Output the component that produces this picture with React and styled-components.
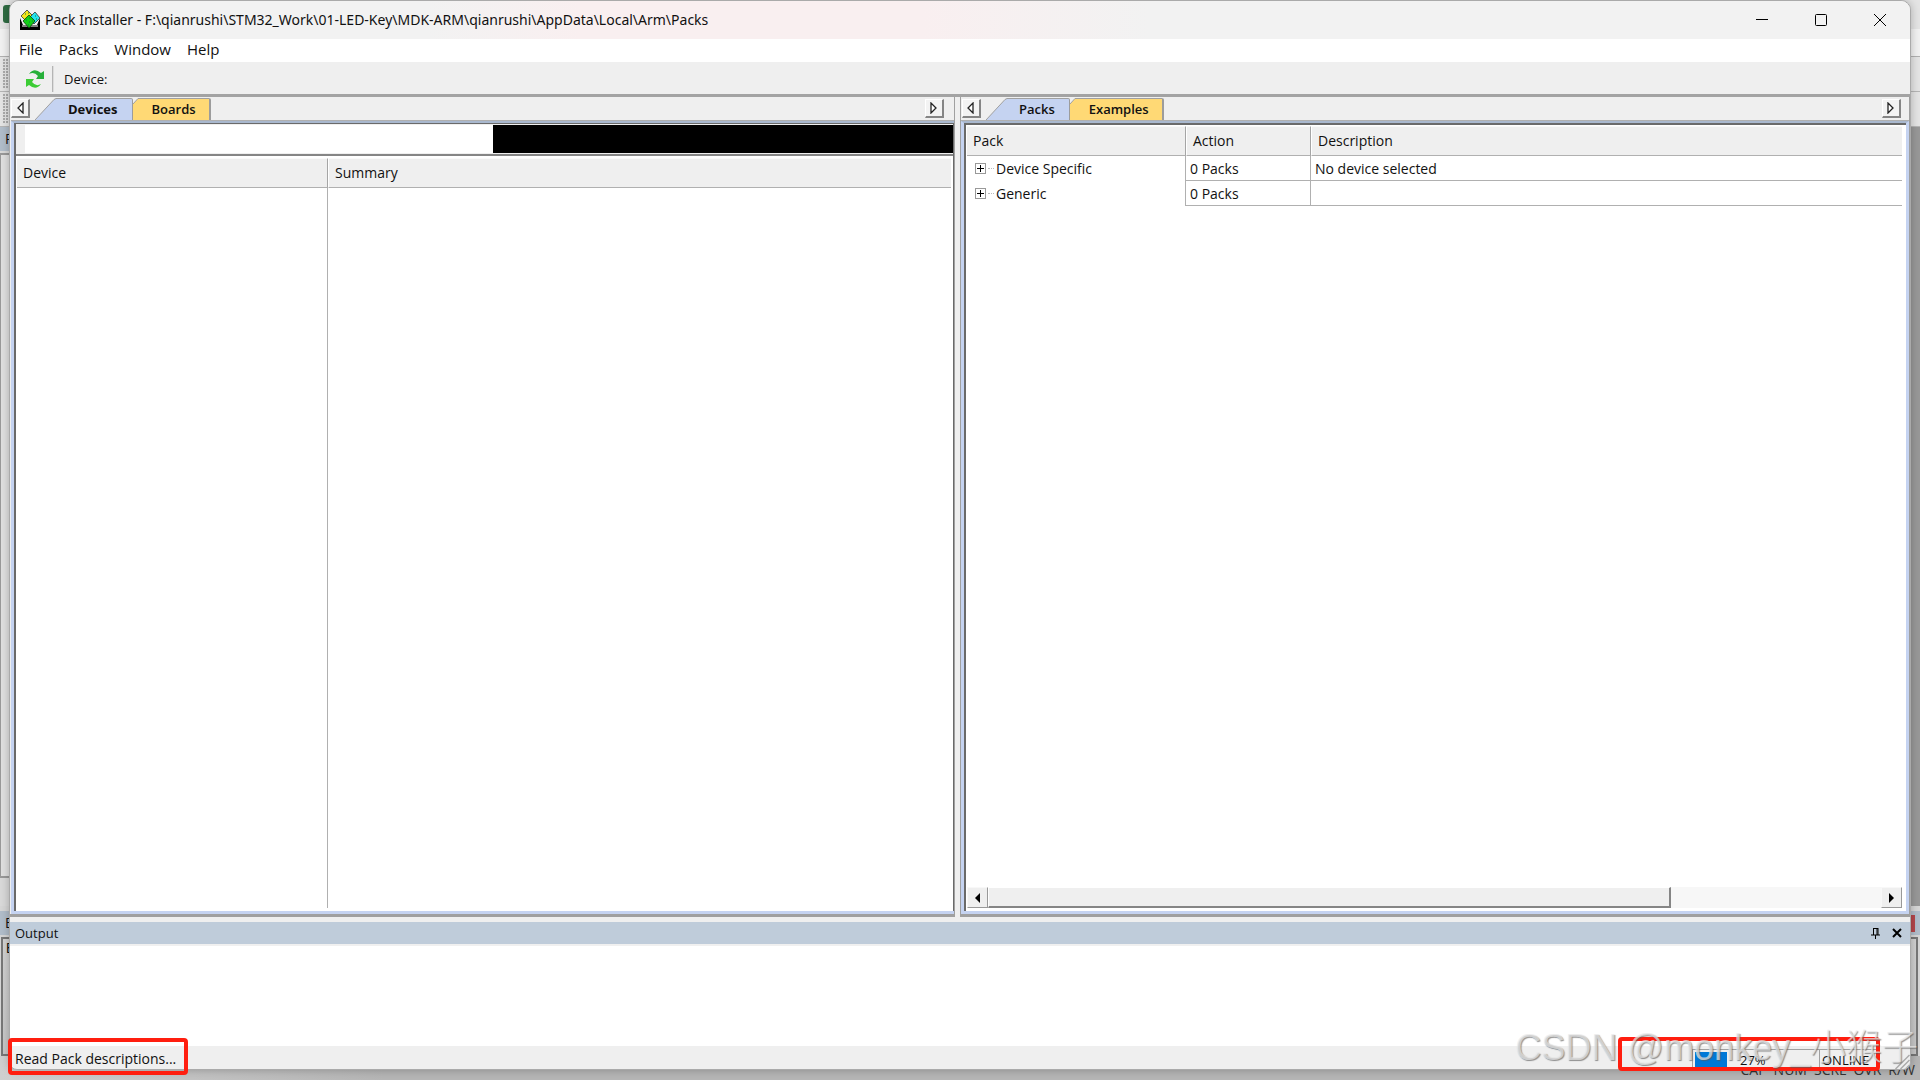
import React from "react";
import styled, { createGlobalStyle, css } from "styled-components";

const GlobalStyle = createGlobalStyle`
  *, *::before, *::after { box-sizing: border-box; }
  body { margin: 0; overflow: hidden; }
  body, button, input, table {
    font-family: "Open Sans", "Noto Sans", sans-serif;
    font-size: 14px;
    line-height: 20px;
    color: #111;
  }
  button { margin: 0; padding: 0; border: 0; background: none; }
`;

const Desktop = styled.div`
  position: relative;
  height: 100vh;
  min-height: 480px;
  overflow: hidden;
  display: flex;
  padding: 0 9px 10px;
  background: #b8b8b8;
`;

/* ---------- IDE window in the background ---------- */

const BackWindow = styled.div`
  position: absolute;
  inset: 0;
  display: flex;
  flex-direction: column;
  background: #d6d6d6;
`;
const BackTitle = styled.div`
  height: 29px;
  padding: 5px 3px;
  background: #e4e4e4;
`;
const BackLogo = styled.div`
  width: 20px;
  height: 18px;
  border-radius: 3px;
  background: #2f6b42;
`;
const BackMenu = styled.div`
  height: 28px;
  background: #f1f1f1;
  border-bottom: 1px solid #b0b0b0;
`;
const BackToolbar = styled.div`
  height: 35px;
  background: #e4e4e4;
  border-bottom: 1px solid #b5b5b5;
  &::before {
    content: "";
    display: block;
    width: 5px;
    height: 30px;
    margin: 2px 3px;
    background: radial-gradient(circle at 1px 1px, #aaa 1px, transparent 1px) 0 0 / 3px 3px;
  }
`;
const BackBody = styled.div`
  flex: 1;
  display: flex;
  justify-content: space-between;
  background: #989898;
`;
const BackDock = styled.div`
  width: 300px;
  display: flex;
  flex-direction: column;
  background: #d9d9d9;
`;
const BackCaption = styled.div`
  height: 24px;
  padding: 2px 5px;
  display: flex;
  justify-content: space-between;
  background: #b1bdca;
`;
const BackTree = styled.div`
  flex: 1;
  margin: 2px 0 28px;
  border: 2px solid #999;
  border-left-width: 1px;
  background: #e0e0e0;
`;
const BackClose = styled.div`
  width: 14px;
  height: 17px;
  margin-top: 2px;
  background: #b5474b;
`;
const BackOutput = styled.div`
  height: 150px;
  display: flex;
  flex-direction: column;
  padding-top: 5px;
`;
const BackLog = styled.div`
  flex: 1;
  margin: 2px 2px 0 1px;
  padding-left: 3px;
  border: 2px solid #777;
  background: linear-gradient(#d2d2d2, #c6c6c6);
  font-family: "Liberation Mono", monospace;
`;
const BackStatus = styled.div`
  height: 24px;
  padding: 4px 5px 0;
  display: flex;
  justify-content: flex-end;
  gap: 7px;
  background: linear-gradient(90deg, #cfcfcf, #b5b5b5 20%);
  color: #333;
`;

/* ---------- Pack Installer window ---------- */

const Window = styled.main`
  position: relative;
  flex: 1;
  min-width: 0;
  display: flex;
  flex-direction: column;
  overflow: hidden;
  border: 1px solid #aaa;
  border-radius: 10px 10px 8px 8px;
  background: #efefef;
  box-shadow: 0 0 8px rgba(0, 0, 0, 0.25);
`;
const TitleBar = styled.header`
  height: 38px;
  flex: none;
  display: flex;
  align-items: center;
  padding: 0 1px 0 10px;
  gap: 5px;
  background: linear-gradient(90deg, #f2f2f2 22%, #f9eff0 30%, #f9eff0 48%, #f2f2f2 60%);
`;
const Title = styled.h1`
  flex: 1;
  margin: 0;
  font-family: "Noto Sans", "Open Sans", sans-serif;
  font-size: 14px;
  font-weight: 400;
  white-space: nowrap;
`;
const CaptionRow = styled.div`
  display: flex;
`;
const CaptionButton = styled.button`
  width: 59px;
  height: 38px;
  display: grid;
  place-items: center;
`;
const MenuBar = styled.nav`
  height: 23px;
  flex: none;
  display: flex;
  align-items: flex-start;
  gap: 16px;
  padding-left: 9px;
  background: #fff;
`;
const MenuItem = styled.button`
  font-size: 15px;
`;
const Toolbar = styled.div`
  height: 32px;
  flex: none;
  display: flex;
  align-items: center;
  padding: 2px 0 0 15px;
`;
const ToolButton = styled.button`
  width: 20px;
  height: 20px;
  display: grid;
  place-items: center;
`;
const ToolSeparator = styled.div`
  width: 2px;
  height: 26px;
  margin: 0 10px 0 7px;
  border-left: 1px solid #b5b5b5;
  border-right: 1px solid #ddd;
`;
const SmallLabel = styled.span`
  font-size: 13px;
  font-weight: 500;
`;

const Panes = styled.div`
  flex: 1;
  min-height: 0;
  display: grid;
  grid-template-columns: 944fr 954fr;
  border-top: 3px solid #a3a3a3;
`;
const Pane = styled.section`
  min-width: 0;
  display: flex;
  flex-direction: column;
  border-bottom: 3px solid #a0a0a0;
  ${(p) => p.$end
    ? css`margin-left: 5px; border-left: 1px solid #a0a0a0; border-right: 1px solid #a0a0a0;`
    : css`padding-left: 1px; border-right: 1px solid #a0a0a0;`}
`;
const TabBar = styled.div`
  height: 24px;
  flex: none;
  display: flex;
  align-items: flex-end;
  padding: ${(p) => (p.$end ? "0 8px 0 1px" : "0 10px 0 0")};
  border-bottom: 1px solid #b0b0b0;
`;
const TabArrow = styled.button`
  width: 19px;
  height: 19px;
  display: grid;
  place-items: center;
  align-self: flex-start;
  margin-top: 2px;
  background: #f3f3f3;
  border: solid;
  border-width: 1px 2px 2px 1px;
  border-color: #fff #858585 #858585 #fff;
`;
const TabList = styled.div`
  flex: 1;
  display: flex;
  padding-left: 5px;
`;
const Tab = styled.button`
  height: 22px;
  display: flex;
  --tab: ${(p) => (p.$active ? "#c5d3f1" : "#ffd975")};
`;
const TabSlope = styled.svg`
  flex: none;
  height: 22px;
  width: ${(p) => p.$size}px;
  fill: var(--tab);
  stroke: #a0a0a0;
`;
const TabLabel = styled.span`
  height: 22px;
  padding: ${(p) => (p.$active ? "0 14px 0 12px" : "0 13px 0 14px")};
  font-size: 13px;
  font-weight: ${(p) => (p.$bold ? 700 : 600)};
  background: var(--tab);
  border-top: 1px solid #a0a0a0;
  border-right: ${(p) => (p.$active ? 1 : 2)}px solid #9c9c9c;
  border-radius: 0 2px 0 0;
`;
const PaneBody = styled.div`
  flex: 1;
  min-height: 0;
  display: flex;
  flex-direction: column;
  border: 3px solid #c5d3f1;
  border-top: 2px solid #a9b8ce;
  ${(p) => !p.$end && css`border-right: 0;`}
`;
const Sunken = styled.div`
  flex: 1;
  min-height: 0;
  display: flex;
  flex-direction: column;
  border: solid #6a6a6a;
  border-width: 2px 0 0 2px;
  background: #fff;
  padding: ${(p) => (p.$end ? "1px 4px 3px 1px" : "0")};
  ${(p) => !p.$end && css`border-width: 1px 1px 0 2px;`}
`;
const SearchRow = styled.div`
  height: 30px;
  flex: none;
  display: flex;
  padding: 1px 0 1px 9px;
  background: #efefef;
`;
const SearchInput = styled.input`
  flex: 1;
  min-width: 0;
  padding: 0 4px;
  border: 0;
  outline: 0;
  background: #fff;
`;
const SearchFill = styled.div`
  flex: 1;
  background: #000;
`;
const TableFrame = styled.div`
  flex: 1;
  min-height: 0;
  border-top: 2px solid #858585;
  padding: 2px 2px 3px 1px;
`;

const Grid = styled.table`
  width: 100%;
  height: ${(p) => (p.$fill ? "100%" : "auto")};
  table-layout: fixed;
  border-collapse: separate;
  border-spacing: 0;
`;
const Col = styled.col`
  width: ${(p) => (p.$size ? `${p.$size}px` : "auto")};
`;
const Th = styled.th`
  height: 30px;
  padding: 0 6px;
  text-align: left;
  font-weight: 400;
  background: #efefef;
  border-top: 1px solid #fafafa;
  border-bottom: 1px solid #b0b0b0;
  & + & { border-left: 1px solid #fff; }
  &:not(:last-child) { border-right: 1px solid #a5a5a5; }
`;
const Td = styled.td`
  height: 25px;
  padding: ${(p) => (p.$plain ? "0 4px" : "2px 4px 0")};
  border-bottom: ${(p) => (p.$plain ? "0" : "1px solid #b0b0b0")};
  &:not(:last-child) { border-right: 1px solid #b0b0b0; }
`;
const TreeCell = styled.div`
  display: flex;
  align-items: center;
  padding-left: 4px;
`;
const Expander = styled.button`
  width: 11px;
  height: 11px;
  display: grid;
  place-items: center;
  border: 1px solid #999;
  background: #fff;
`;
const TreeLine = styled.span`
  width: 6px;
  margin: 0 2px;
  border-top: 1px dotted #bbb;
`;

const ScrollBar = styled.div`
  height: 21px;
  flex: none;
  display: flex;
  margin-top: auto;
  background: #f7f7f7;
`;
const ScrollButton = styled.button`
  width: 21px;
  display: grid;
  place-items: center;
  background: #efefef;
  border: 1px solid;
  border-color: #f8f8f8 #999 #999 #f8f8f8;
`;
const ScrollTrack = styled.div`
  flex: 1;
  display: flex;
`;
const ScrollThumb = styled.div`
  width: 76.5%;
  background: #efefef;
  border: solid;
  border-width: 1px 2px 2px 1px;
  border-color: #fff #858585 #858585 #fff;
`;

const Output = styled.section`
  flex: none;
  padding-top: 5px;
`;
const OutputHeader = styled.div`
  height: 22px;
  display: flex;
  align-items: center;
  gap: 10px;
  padding: 0 7px 0 5px;
  background: #bfccda;
`;
const OutputTitle = styled.h2`
  flex: 1;
  margin: 0;
  font-size: 13px;
  font-weight: 400;
  line-height: 22px;
`;
const OutputText = styled.div`
  height: 102px;
  border-top: 2px solid #f0f0f0;
  background: #fff;
`;
const IconButton = styled.button`
  width: 12px;
  height: 14px;
  display: grid;
  place-items: center;
`;
const StatusBar = styled.footer`
  height: 23px;
  flex: none;
  display: flex;
  align-items: stretch;
  padding-left: 5px;
`;
const StatusMessage = styled.span`
  flex: 1;
  font-size: 14px;
  line-height: 26px;
`;
const StatusCell = styled.div`
  width: ${(p) => p.$size}px;
  margin-top: 3px;
  display: flex;
  align-items: center;
  gap: 13px;
  padding-left: 2px;
  font-size: 13px;
  font-weight: 500;
  border-top: 1px solid #a0a0a0;
  border-left: 1px solid #a0a0a0;
`;
const ProgressFill = styled.div`
  width: 32px;
  height: 16px;
  background: #0078d7;
`;
const Grip = styled.svg`
  width: 33px;
  height: 20px;
  align-self: flex-end;
`;

/* ---------- annotations over the page ---------- */

const Marker = styled.div`
  position: absolute;
  border: 4px solid #ff1e0f;
  border-radius: 4px;
  ${(p) => p.$end
    ? css`right: 40px; bottom: 9px; width: 262px; height: 34px;`
    : css`left: 8px; bottom: 5px; width: 180px; height: 37px;`}
`;
const Watermark = styled.div`
  position: absolute;
  right: 2px;
  bottom: 12px;
  font-family: "Liberation Sans", "Noto Sans CJK SC", sans-serif;
  font-size: 36px;
  line-height: 40px;
  font-weight: 300;
  white-space: nowrap;
  color: rgba(235, 235, 235, 0.7);
  text-shadow: 1px 1px 1px rgba(90, 90, 90, 0.65);
`;

const AppIcon = () => (
  <svg width="20" height="20" viewBox="0 0 20 20" aria-hidden="true">
    <path d="M0 8v12h20V8l-3 7H3z" fill="#000" />
    <path d="M2 16h16" stroke="#fff" />
    <path d="M1 6l6-6 5 5-6 6z" fill="#f4e51c" stroke="#333" strokeWidth=".8" />
    <path d="M9 8l6-6 5 6-6 6z" fill="#25e4ee" stroke="#333" strokeWidth=".8" />
    <path d="M3 11l6-6 6 6-6 7z" fill="#12cf16" stroke="#083c08" strokeWidth=".8" />
    <path d="M6 10h1M9 8h1M9 12h1M12 11h1M8 15h1M5 4h1M8 3h1M15 6h1M16 9h1" stroke="#174" />
  </svg>
);

const RefreshIcon = () => (
  <svg width="20" height="20" viewBox="0 0 20 20" aria-hidden="true">
    <path d="M4 5Q9-2 16 4l3-2v8h-8l2-3Q9 2 4 5z" fill="#27b03a" />
    <path d="M16 15Q11 22 4 16l-3 2v-8h8l-2 3q4 5 9 2z" fill="#3ccc35" />
  </svg>
);

const Triangle = ({ left, solid }) => (
  <svg width="9" height="12" viewBox="0 0 9 12" aria-hidden="true">
    <path
      d={left ? "M7 1v10L2 6z" : "M2 1v10l5-5z"}
      fill={solid ? "#000" : "#fff"}
      stroke={solid ? "none" : "#222"}
      strokeWidth="1.3"
    />
  </svg>
);

const PaneTabs = ({ tabs, bold, end }) => (
  <TabBar $end={end}>
    <TabArrow aria-label="Scroll tabs left"><Triangle left /></TabArrow>
    <TabList role="tablist">
      {tabs.map((name, i) =>
        i === 0 ? (
          <Tab key={name} role="tab" aria-selected="true" $active>
            <TabSlope $size={21} viewBox="0 0 21 22" aria-hidden="true">
              <path d="M0 22L19 1.5L21 .5V22" stroke="none" />
              <path d="M0 22L19 1.5L21 .5" fill="none" />
            </TabSlope>
            <TabLabel $active $bold={bold}>{name}</TabLabel>
          </Tab>
        ) : (
          <Tab key={name} role="tab" aria-selected="false">
            <TabSlope $size={5} viewBox="0 0 5 22" aria-hidden="true">
              <path d="M0 22V6L5 .5V22" stroke="none" />
              <path d="M0 6L5 .5" fill="none" />
            </TabSlope>
            <TabLabel>{name}</TabLabel>
          </Tab>
        )
      )}
    </TabList>
    <TabArrow aria-label="Scroll tabs right"><Triangle /></TabArrow>
  </TabBar>
);

const packs = [
  { name: "Device Specific", action: "0 Packs", description: "No device selected" },
  { name: "Generic", action: "0 Packs", description: "" },
];

export default function App() {
  return (
    <Desktop>
      <GlobalStyle />
      <BackWindow aria-hidden="true">
        <BackTitle><BackLogo /></BackTitle>
        <BackMenu />
        <BackToolbar />
        <BackToolbar />
        <BackBody>
          <BackDock>
            <BackCaption>P</BackCaption>
            <BackTree />
          </BackDock>
        </BackBody>
        <BackOutput>
          <BackCaption>B<BackClose /></BackCaption>
          <BackLog>B</BackLog>
        </BackOutput>
        <BackStatus>
          <span>CAP</span><span>NUM</span><span>SCRL</span><span>OVR</span><span>R/W</span>
        </BackStatus>
      </BackWindow>

      <Window>
        <TitleBar>
          <AppIcon />
          <Title>{"Pack Installer - F:\\qianrushi\\STM32_Work\\01-LED-Key\\MDK-ARM\\qianrushi\\AppData\\Local\\Arm\\Packs"}</Title>
          <CaptionRow>
            <CaptionButton aria-label="Minimize">
              <svg width="12" height="12" viewBox="0 0 12 12"><path d="M0 5.5h12" stroke="#000" /></svg>
            </CaptionButton>
            <CaptionButton aria-label="Maximize">
              <svg width="12" height="12" viewBox="0 0 12 12"><rect x=".5" y=".5" width="11" height="11" rx="1" fill="none" stroke="#000" /></svg>
            </CaptionButton>
            <CaptionButton aria-label="Close">
              <svg width="12" height="12" viewBox="0 0 12 12"><path d="M0 0l12 12M12 0L0 12" stroke="#000" /></svg>
            </CaptionButton>
          </CaptionRow>
        </TitleBar>
        <MenuBar>
          {["File", "Packs", "Window", "Help"].map((m) => <MenuItem key={m}>{m}</MenuItem>)}
        </MenuBar>
        <Toolbar>
          <ToolButton aria-label="Check for updates"><RefreshIcon /></ToolButton>
          <ToolSeparator />
          <SmallLabel>Device:</SmallLabel>
        </Toolbar>

        <Panes>
          <Pane>
            <PaneTabs tabs={["Devices", "Boards"]} bold />
            <PaneBody>
              <Sunken>
                <SearchRow>
                  <SearchInput aria-label="Search devices" />
                  <SearchFill />
                </SearchRow>
                <TableFrame>
                  <Grid $fill>
                    <colgroup><Col $size={311} /><Col /></colgroup>
                    <thead><tr><Th>Device</Th><Th>Summary</Th></tr></thead>
                    <tbody><tr><Td $plain /><Td $plain /></tr></tbody>
                  </Grid>
                </TableFrame>
              </Sunken>
            </PaneBody>
          </Pane>

          <Pane $end>
            <PaneTabs tabs={["Packs", "Examples"]} end />
            <PaneBody $end>
              <Sunken $end>
                <Grid>
                  <colgroup><Col $size={219} /><Col $size={125} /><Col /></colgroup>
                  <thead><tr><Th>Pack</Th><Th>Action</Th><Th>Description</Th></tr></thead>
                  <tbody>
                    {packs.map((p) => (
                      <tr key={p.name}>
                        <Td $plain>
                          <TreeCell>
                            <Expander aria-label={`Expand ${p.name}`}>
                              <svg width="7" height="7" viewBox="0 0 7 7"><path d="M0 3.5h7M3.5 0v7" stroke="#000" /></svg>
                            </Expander>
                            <TreeLine />
                            {p.name}
                          </TreeCell>
                        </Td>
                        <Td>{p.action}</Td>
                        <Td>{p.description}</Td>
                      </tr>
                    ))}
                  </tbody>
                </Grid>
                <ScrollBar>
                  <ScrollButton aria-label="Scroll left"><Triangle left solid /></ScrollButton>
                  <ScrollTrack><ScrollThumb /></ScrollTrack>
                  <ScrollButton aria-label="Scroll right"><Triangle solid /></ScrollButton>
                </ScrollBar>
              </Sunken>
            </PaneBody>
          </Pane>
        </Panes>

        <Output>
          <OutputHeader>
            <OutputTitle>Output</OutputTitle>
            <IconButton aria-label="Auto hide">
              <svg width="9" height="11" viewBox="0 0 9 11"><path d="M2 .5h5M2.5 0v7M6 0v7M7 0v7M0 7h9M4.5 7v4" stroke="#000" fill="none" /></svg>
            </IconButton>
            <IconButton aria-label="Close output">
              <svg width="10" height="10" viewBox="0 0 10 10"><path d="M1 1l8 8M9 1L1 9" stroke="#000" strokeWidth="2" /></svg>
            </IconButton>
          </OutputHeader>
          <OutputText role="log" />
        </Output>

        <StatusBar>
          <StatusMessage>Read Pack descriptions...</StatusMessage>
          <StatusCell $size={127}><ProgressFill /><span>27%</span></StatusCell>
          <StatusCell $size={58}>ONLINE</StatusCell>
          <Grip viewBox="0 0 32 20" aria-hidden="true">
            <path d="M18 20L32 6M23 20l9-9M28 20l4-4" stroke="#aaa" strokeWidth="1.5" />
          </Grip>
        </StatusBar>
      </Window>

      <Marker />
      <Marker $end />
      <Watermark>CSDN @monkey_小猴子</Watermark>
    </Desktop>
  );
}
